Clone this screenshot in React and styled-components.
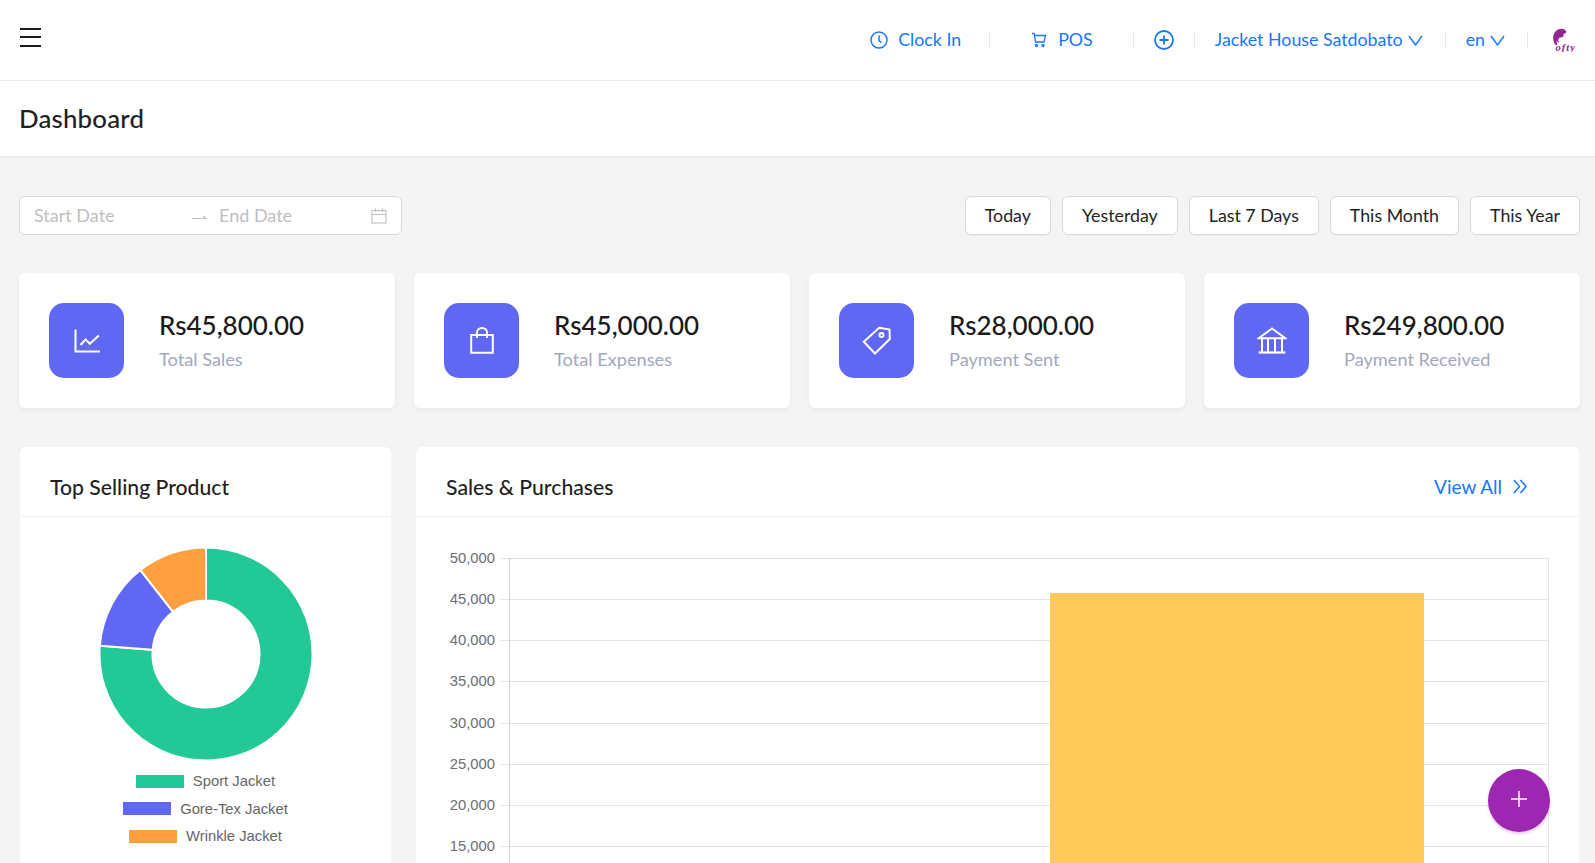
import React from "react";
import styled, { createGlobalStyle } from "styled-components";

const FONT = `Lato, "Noto Sans", "Liberation Sans", sans-serif`;
const ARIAL = `"Liberation Sans", Arial, sans-serif`;
const BLUE = "#1677ff";

const Global = createGlobalStyle`
  html, body { margin: 0; padding: 0; height: 100%; overflow: hidden; background: #f4f4f4; }
  body { font-family: ${FONT}; color: #1f1f1f; }
  * { box-sizing: border-box; }
`;

const Page = styled.div`height: 863px; overflow: hidden; position: relative;`;

const TopBar = styled.header`
  height: 81px; background: #fff; border-bottom: 1px solid #ececec;
  display: flex; align-items: center; justify-content: space-between;
  padding: 0 18px 0 20px;
`;
const MenuButton = styled.button`
  display: flex; flex-direction: column; gap: 6.5px; width: 21px; padding: 0; margin-top: -6px;
  background: none; border: 0;
  span { display: block; height: 2px; background: #1a1a1a; }
`;
const NavRow = styled.nav`display: flex; align-items: center; color: ${BLUE}; font-size: 17.8px;`;
const NavItem = styled.div`
  display: flex; align-items: center; gap: ${p => p.$gap ?? 5}px;
  padding: ${p => p.$pad || "0 20px"};
  height: 16px;
  border-right: ${p => (p.$last ? "0" : "1px solid #e6e6e6")};
  white-space: nowrap;
`;
const NavText = styled.span`margin-top: -2px;`;

const TitleBand = styled.div`
  height: 76px; background: #fff; border-bottom: 1px solid #ececec;
  display: flex; align-items: center; padding: 0 19px 2px 19px;
`;
const PageTitle = styled.h1`margin: 0; font-size: 25.8px; font-weight: 500; color: #1f1f1f; letter-spacing: .2px;`;

const Content = styled.main`padding: 39px 15px 0 19px;`;

const FilterRow = styled.div`display: flex; justify-content: space-between; align-items: center; height: 39px;`;
const DateRange = styled.div`
  width: 383px; height: 39px; background: #fff; border: 1px solid #d9d9d9; border-radius: 6px;
  display: grid; grid-template-columns: 158px 27px 1fr 16px; align-items: center; padding: 0 14px 0 14px;
  color: #bfbfbf; font-size: 18px;
`;
const DateText = styled.span`margin-top: -2px;`;
const QuickButtons = styled.div`display: flex; gap: 11px;`;
const QuickButton = styled.button`
  height: 39px; padding: 0 19px 2px; background: #fff; border: 1px solid #d9d9d9; border-radius: 6px;
  font: 400 17.8px ${FONT}; color: #1f1f1f; box-shadow: 0 1px 1px rgba(0,0,0,.03); white-space: nowrap;
`;

const StatGrid = styled.section`display: grid; grid-template-columns: repeat(4, 376px); column-gap: 19px; margin-top: 38px;`;
const StatCard = styled.article`
  height: 135px; background: #fff; border-radius: 6px; box-shadow: 0 2px 5px rgba(0,0,0,.05);
  display: flex; align-items: center; padding: 0 30px; gap: 35px;
`;
const StatIcon = styled.div`
  width: 75px; height: 75px; border-radius: 15px; background: #6067f3; flex: none;
  display: flex; align-items: center; justify-content: center;
`;
const StatText = styled.div`display: flex; flex-direction: column; gap: 6px; padding-bottom: 2px;`;
const StatValue = styled.div`font-size: 26px; font-weight: 500; color: #1a1a1a; line-height: 32px;`;
const StatLabel = styled.div`font-size: 18.2px; color: #a3a8bd; line-height: 24px;`;

const ChartGrid = styled.section`display: grid; grid-template-columns: 371px 1163px; column-gap: 25px; margin: 39px 0 0 1px;`;
const Panel = styled.article`background: #fff; border-radius: 6px 6px 0 0; height: 500px;`;
const PanelHead = styled.div`
  height: 70px; border-bottom: 1px solid #efefef; padding: 10px 52px 0 30px;
  display: flex; align-items: center; justify-content: space-between;
`;
const PanelTitle = styled.h2`margin: 0; font-size: 21.2px; font-weight: 500; color: #1f1f1f;`;
const ViewAll = styled.a`display: flex; align-items: center; gap: 11px; color: ${BLUE}; font-size: 19px;`;

const DonutBody = styled.div`padding-top: 29px; display: flex; flex-direction: column; align-items: center;`;
const LegendList = styled.ul`list-style: none; margin: 9px 0 0; padding: 0; display: flex; flex-direction: column; gap: 7px; align-items: center;`;
const LegendRow = styled.li`display: flex; align-items: center; gap: 9px; font: 14.8px/20.5px ${ARIAL}; color: #666;`;
const Swatch = styled.span`width: 48px; height: 13px; background: ${p => p.$c}; display: block;`;

const ChartSvg = styled.svg`display: block; overflow: hidden;`;
const DonutSvg = styled.svg`display: block;`;

const Fab = styled.button`
  position: fixed; left: 1488px; top: 769px; width: 62px; height: 63px; border-radius: 50%; border: 0;
  background: #9c27b0; box-shadow: 0 2px 3px rgba(156,39,176,.25);
  display: flex; align-items: center; justify-content: center; padding: 0 0 3px;
`;

const Ico = ({ w = 24, h = 24, sw = 2, c = "#fff", children }) => (
  <svg width={w} height={h} viewBox={`0 0 ${w} ${h}`} fill="none" stroke={c} strokeWidth={sw} strokeLinejoin="miter">{children}</svg>
);

const LogoMark = () => (
  <svg width="28" height="24" viewBox="0 0 28 24">
    <path d="M6 16.500C2.800 11 3.800 4.500 8.500 1.800c3.300-1.800 8-1 8.600 1.700.4 1.800-1.300 2.300-2.900 2.400 1 1 .6 2.900-1.300 3.300-1.100.2-2.200.2-3 1.100-.9 1.200-.6 3 .3 4.700-1-.4-1.900-1.300-2.400-2.800-.3 2 .2 3.500.9 5.200L6 16.500z" fill="#94278f" />
    <text x="6.500" y="23" fontFamily='"Liberation Serif", serif' fontStyle="italic" fontWeight="700" fontSize="10.500" letterSpacing="1" fill="#94278f">ofty</text>
  </svg>
);

const stats = [
  { v: "Rs45,800.00", l: "Total Sales", i: (
    <Ico w={26} h={24}><path d="M1.500 .5V22.500H26" /><path d="M6.500 16l5-5.500 4.300 4.300 9-8.300" /></Ico>) },
  { v: "Rs45,000.00", l: "Total Expenses", i: (
    <Ico w={24} h={27}><path d="M1.200 8h21.600v17.800H1.200z" /><path d="M7 11V5.500a5 4.500 0 0 1 10 0V11" /></Ico>) },
  { v: "Rs28,000.00", l: "Payment Sent", i: (
    <Ico w={30} h={29}><path d="M17.200 1.800L27.500 3.500 27.800 13 13 27.500 1.800 15.700z" /><circle cx="19.500" cy="9" r="2" /></Ico>) },
  { v: "Rs249,800.00", l: "Payment Received", i: (
    <Ico w={30} h={27}><path d="M15 1.500L1.800 11.200h26.400z" /><path d="M5 11v14M11 11v14M18 11v14M25 11v14" /><path d="M1.500 25.500h27" strokeWidth="2.200" /></Ico>) },
];
const legend = [["Sport Jacket", "#22c997"], ["Gore-Tex Jacket", "#6067f3"], ["Wrinkle Jacket", "#ffa040"]];

const pt = (r, a) => {
  const t = ((a - 90) * Math.PI) / 180;
  return [r * Math.cos(t), r * Math.sin(t)];
};
const arc = (a0, a1, R, r) => {
  const [x0, y0] = pt(R, a0), [x1, y1] = pt(R, a1), [x2, y2] = pt(r, a1), [x3, y3] = pt(r, a0);
  const big = a1 - a0 > 180 ? 1 : 0;
  return `M${x0} ${y0}A${R} ${R} 0 ${big} 1 ${x1} ${y1}L${x2} ${y2}A${r} ${r} 0 ${big} 0 ${x3} ${y3}Z`;
};

const Donut = () => (
  <DonutSvg width="216" height="216" viewBox="-108 -108 216 216">
    {[[0, 274.5, "#22c997"], [274.5, 322, "#6067f3"], [322, 360, "#ffa040"]].map(([a, b, c]) => (
      <path key={c} d={arc(a, b, 106.5, 53.5)} fill={c} stroke="#fff" strokeWidth="2" />
    ))}
  </DonutSvg>
);

const ticks = ["50,000", "45,000", "40,000", "35,000", "30,000", "25,000", "20,000", "15,000"];
const SalesChart = () => (
  <ChartSvg width="1163" height="430" viewBox="416 517 1163 430">
    {ticks.map((t, i) => {
      const y = Math.round(558 + i * 41.15) + 0.5;
      return (
        <g key={t}>
          <line x1="500" x2="1549" y1={y} y2={y} stroke="#e5e5e5" />
          <text x="495" y={y + 4} textAnchor="end" fontFamily={ARIAL} fontSize="14.8" fill="#6e6e6e">{t}</text>
        </g>
      );
    })}
    <line x1="509.500" x2="509.500" y1="558" y2="880" stroke="#cfcfcf" />
    <line x1="1548.500" x2="1548.500" y1="558" y2="880" stroke="#e5e5e5" />
    <rect x="1050" y="593" width="374" height="300" fill="#ffca59" />
  </ChartSvg>
);

export default function App() {
  return (
    <Page>
      <Global />
      <TopBar>
        <MenuButton aria-label="menu"><span /><span /><span /></MenuButton>
        <NavRow>
          <NavItem $gap={10} $pad="0 28px 0 0">
            <svg width="18" height="18" viewBox="0 0 18 18" fill="none" stroke={BLUE} strokeWidth="1.500"><circle cx="9" cy="9" r="8" /><path d="M9 4.500V9.500l2.500 2.200" /></svg>
            <NavText>Clock In</NavText>
          </NavItem>
          <NavItem $gap={11} $pad="0 40px 0 41px">
            <svg width="16" height="16" viewBox="0 0 16 16" fill="none" stroke={BLUE} strokeWidth="1.300"><path d="M1 1.500h2.200l1.300 8.500h8.500l1.500-6.500H3.500" /><circle cx="5.500" cy="13.500" r="1.100" /><circle cx="12" cy="13.500" r="1.100" /></svg>
            <NavText>POS</NavText>
          </NavItem>
          <NavItem $pad="0 20px">
            <svg width="20" height="20" viewBox="0 0 20 20" fill="none" stroke={BLUE} strokeWidth="1.800"><circle cx="10" cy="10" r="9" /><path d="M10 5.500v9M5.500 10h9" /></svg>
          </NavItem>
          <NavItem $gap={5} $pad="0 22px 0 20px">
            <NavText>Jacket House Satdobato</NavText>
            <svg width="15" height="11" viewBox="0 0 15 11" fill="none" stroke={BLUE} strokeWidth="1.400"><path d="M1 1l6.500 9L14 1" /></svg>
          </NavItem>
          <NavItem $gap={5} $pad="0 22px 0 20px">
            <NavText>en</NavText>
            <svg width="15" height="11" viewBox="0 0 15 11" fill="none" stroke={BLUE} strokeWidth="1.400"><path d="M1 1l6.500 9L14 1" /></svg>
          </NavItem>
          <NavItem $last $pad="0 0 0 21px"><LogoMark /></NavItem>
        </NavRow>
      </TopBar>
      <TitleBand><PageTitle>Dashboard</PageTitle></TitleBand>
      <Content>
        <FilterRow>
          <DateRange>
            <DateText>Start Date</DateText>
            <svg width="16" height="8" viewBox="0 0 16 8" fill="none" stroke="#bfbfbf" strokeWidth="1.200"><path d="M0 6.500h14l-3-2.500" /></svg>
            <DateText>End Date</DateText>
            <svg width="16" height="16" viewBox="0 0 16 16" fill="none" stroke="#bfbfbf" strokeWidth="1.100"><rect x="1" y="2.500" width="14" height="12.500" /><path d="M1 6.500h14M4.500 .5v3.500M11.500 .5v3.500" /></svg>
          </DateRange>
          <QuickButtons>
            {["Today", "Yesterday", "Last 7 Days", "This Month", "This Year"].map(t => <QuickButton key={t}>{t}</QuickButton>)}
          </QuickButtons>
        </FilterRow>
        <StatGrid>
          {stats.map(s => (
            <StatCard key={s.l}>
              <StatIcon>{s.i}</StatIcon>
              <StatText>
                <StatValue>{s.v}</StatValue>
                <StatLabel>{s.l}</StatLabel>
              </StatText>
            </StatCard>
          ))}
        </StatGrid>
        <ChartGrid>
          <Panel>
            <PanelHead><PanelTitle>Top Selling Product</PanelTitle></PanelHead>
            <DonutBody>
              <Donut />
              <LegendList>
                {legend.map(([t, c]) => <LegendRow key={t}><Swatch $c={c} />{t}</LegendRow>)}
              </LegendList>
            </DonutBody>
          </Panel>
          <Panel>
            <PanelHead>
              <PanelTitle>Sales &amp; Purchases</PanelTitle>
              <ViewAll>
                View All
                <svg width="14" height="15" viewBox="0 0 14 15" fill="none" stroke={BLUE} strokeWidth="1.500"><path d="M1 1l5.500 6.500L1 14M7.500 1L13 7.500 7.500 14" /></svg>
              </ViewAll>
            </PanelHead>
            <SalesChart />
          </Panel>
        </ChartGrid>
      </Content>
      <Fab aria-label="add">
        <svg width="18" height="18" viewBox="0 0 18 18" stroke="#fff" strokeWidth="1.500"><path d="M9 1v16M1 9h16" /></svg>
      </Fab>
    </Page>
  );
}
